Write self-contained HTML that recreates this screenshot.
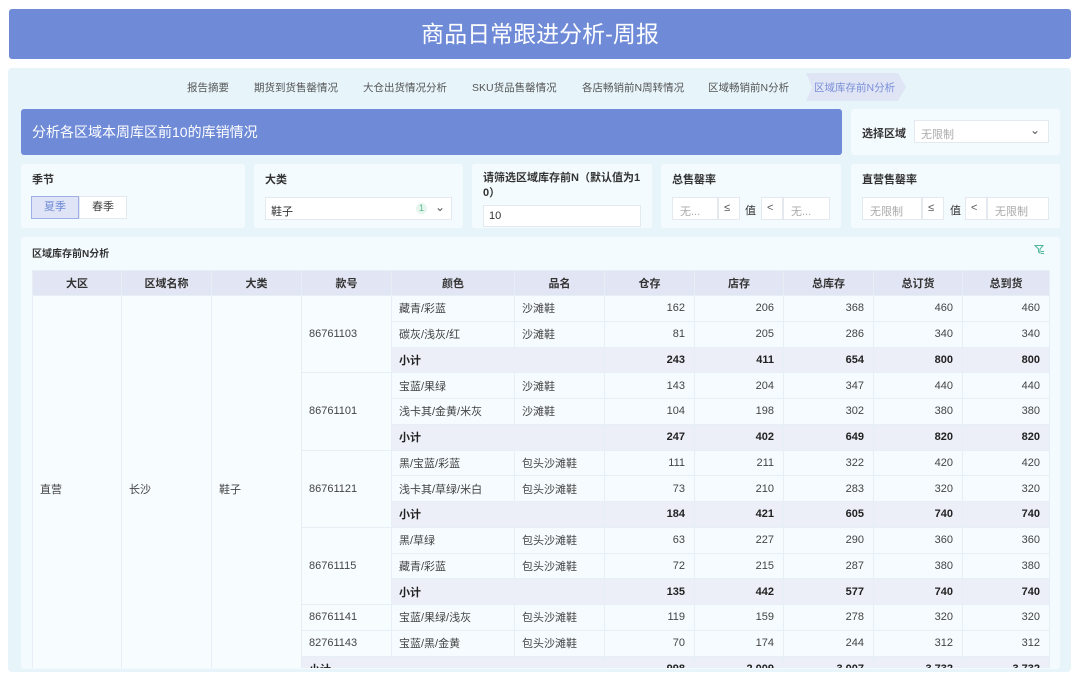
<!DOCTYPE html>
<html><head><meta charset="utf-8"><style>
*{box-sizing:border-box;margin:0;padding:0}
body{width:1080px;height:675px;overflow:hidden;background:#fff;font-family:"Liberation Sans","Noto Sans CJK SC",sans-serif;color:#333;position:relative}
.abs{position:absolute}
.title{left:9px;top:9px;width:1062px;height:50px;background:#6f8bd8;border-radius:3px;color:#fff;font-size:23px;text-align:center;line-height:50px}
.main{left:8px;top:68px;width:1063px;height:604px;background:#e7f5fb;border-radius:4px}
.tab{position:absolute;top:80px;font-size:10.5px;color:#555;white-space:nowrap}
.card{background:#f4fbfe;border-radius:3px}
.lbl{font-size:11px;font-weight:bold;color:#333}
.inp{position:absolute;background:#fff;border:1px solid #e3e9ee;font-size:11px;color:#aaa}
table{border-collapse:collapse;table-layout:fixed;position:absolute;width:1017px;font-size:11px}
td,th{border:1px solid #e6eff5;height:25.75px;padding:0 7px;white-space:nowrap;overflow:hidden}
th{background:#e2e5f3;font-weight:bold;color:#333;text-align:center;height:25px}
td{background:#f5fbfe;color:#444}
td.n{text-align:right;padding-right:9px}
tr.s td{background:#eceff8;font-weight:bold;color:#222}
td.l{background:#f7fcfe}
</style></head><body>
<div class="abs title">商品日常跟进分析-周报</div>
<div class="abs main"></div>
<div class="tab" style="left:187px">报告摘要</div>
<div class="tab" style="left:254px">期货到货售罄情况</div>
<div class="tab" style="left:363px">大仓出货情况分析</div>
<div class="tab" style="left:472px">SKU货品售罄情况</div>
<div class="tab" style="left:582px">各店畅销前N周转情况</div>
<div class="tab" style="left:708px">区域畅销前N分析</div>
<div class="abs" style="left:806px;top:73px;width:100px;height:28px;background:#dfe5f5;clip-path:polygon(0 0,92% 0,100% 50%,92% 100%,0 100%,6% 50%)"></div>
<div class="tab" style="left:814px;color:#7b8fd8">区域库存前N分析</div>

<div class="abs" style="left:21px;top:109px;width:821px;height:46px;background:#6f8bd8;border-radius:3px;color:#fff;font-size:14px;line-height:46px;padding-left:11px">分析各区域本周库区前10的库销情况</div>
<div class="abs card" style="left:851px;top:109px;width:209px;height:46px"></div>
<div class="abs lbl" style="left:862px;top:125px">选择区域</div>
<div class="inp" style="left:914px;top:120px;width:135px;height:23px;padding:5px 6px">无限制<span style="position:absolute;right:8px;top:2px;color:#555;font-size:12px">⌄</span></div>

<div class="abs card" style="left:21px;top:164px;width:224px;height:64px"></div>
<div class="abs lbl" style="left:32px;top:171px">季节</div>
<div class="inp" style="left:31px;top:196px;width:48px;height:23px;background:#dfe4f6;border-color:#9fb0e6;color:#6f8bd8;text-align:center;line-height:21px">夏季</div>
<div class="inp" style="left:79px;top:196px;width:48px;height:23px;color:#444;text-align:center;line-height:21px">春季</div>

<div class="abs card" style="left:254px;top:164px;width:209px;height:64px"></div>
<div class="abs lbl" style="left:265px;top:171px">大类</div>
<div class="inp" style="left:265px;top:197px;width:187px;height:23px;color:#333;padding:5px 5px">鞋子<span style="position:absolute;right:24px;top:5px;width:11px;height:11px;border-radius:50%;background:#e6f6ee;color:#5bb88b;font-size:9px;text-align:center;line-height:11px">1</span><span style="position:absolute;right:6px;top:2px;font-size:12px;color:#555">⌄</span></div>

<div class="abs card" style="left:472px;top:164px;width:180px;height:64px"></div>
<div class="abs lbl" style="left:483px;top:171px;width:160px;line-height:15px">请筛选区域库存前N（默认值为1<br>0）</div>
<div class="inp" style="left:483px;top:205px;width:158px;height:22px;color:#333;padding:4px 5px">10</div>

<div class="abs card" style="left:661px;top:164px;width:180px;height:64px"></div>
<div class="abs lbl" style="left:672px;top:171px">总售罄率</div>
<div class="inp" style="left:672px;top:197px;width:46px;height:23px;padding:5px 7px">无...</div>
<div class="inp" style="left:718px;top:197px;width:22px;height:23px;color:#555;padding:4px 5px">≤</div>
<div class="abs" style="left:745px;top:202px;font-size:11px">值</div>
<div class="inp" style="left:761px;top:197px;width:22px;height:23px;color:#555;padding:4px 5px">&lt;</div>
<div class="inp" style="left:783px;top:197px;width:47px;height:23px;padding:5px 7px">无...</div>

<div class="abs card" style="left:851px;top:164px;width:209px;height:64px"></div>
<div class="abs lbl" style="left:862px;top:171px">直营售罄率</div>
<div class="inp" style="left:862px;top:197px;width:60px;height:23px;padding:5px 7px">无限制</div>
<div class="inp" style="left:922px;top:197px;width:22px;height:23px;color:#555;padding:4px 5px">≤</div>
<div class="abs" style="left:950px;top:202px;font-size:11px">值</div>
<div class="inp" style="left:965px;top:197px;width:22px;height:23px;color:#555;padding:4px 5px">&lt;</div>
<div class="inp" style="left:987px;top:197px;width:62px;height:23px;padding:5px 7px">无限制</div>

<div class="abs card" style="left:21px;top:237px;width:1039px;height:432px;overflow:hidden"></div>
<div class="abs lbl" style="left:32px;top:245px;font-size:10px">区域库存前N分析</div>
<svg class="abs" style="left:1034px;top:244px" width="11" height="11" viewBox="0 0 11 11"><path d="M1 1.5h8L6 5v4L4.5 8V5z" fill="none" stroke="#4cb89a" stroke-width="1"/><path d="M7 7.5h3M7 9.5h3" stroke="#4cb89a"/></svg>
<div class="abs" style="left:21px;top:237px;width:1039px;height:431px;overflow:hidden">
<table style="left:11px;top:33px">
<colgroup><col style="width:89px"><col style="width:90px"><col style="width:90px"><col style="width:90px"><col style="width:123px"><col style="width:90px"><col style="width:90px"><col style="width:89px"><col style="width:90px"><col style="width:89px"><col style="width:87px"></colgroup>
<tr><th>大区</th><th>区域名称</th><th>大类</th><th>款号</th><th>颜色</th><th>品名</th><th>仓存</th><th>店存</th><th>总库存</th><th>总订货</th><th>总到货</th></tr>
<tr><td class="l" rowspan="16">直营</td><td class="l" rowspan="16">长沙</td><td class="l" rowspan="16">鞋子</td><td class="l" rowspan="3">86761103</td><td>藏青/彩蓝</td><td>沙滩鞋</td><td class="n">162</td><td class="n">206</td><td class="n">368</td><td class="n">460</td><td class="n">460</td></tr>
<tr><td>碳灰/浅灰/红</td><td>沙滩鞋</td><td class="n">81</td><td class="n">205</td><td class="n">286</td><td class="n">340</td><td class="n">340</td></tr>
<tr class="s"><td colspan="2">小计</td><td class="n">243</td><td class="n">411</td><td class="n">654</td><td class="n">800</td><td class="n">800</td></tr>
<tr><td class="l" rowspan="3">86761101</td><td>宝蓝/果绿</td><td>沙滩鞋</td><td class="n">143</td><td class="n">204</td><td class="n">347</td><td class="n">440</td><td class="n">440</td></tr>
<tr><td>浅卡其/金黄/米灰</td><td>沙滩鞋</td><td class="n">104</td><td class="n">198</td><td class="n">302</td><td class="n">380</td><td class="n">380</td></tr>
<tr class="s"><td colspan="2">小计</td><td class="n">247</td><td class="n">402</td><td class="n">649</td><td class="n">820</td><td class="n">820</td></tr>
<tr><td class="l" rowspan="3">86761121</td><td>黑/宝蓝/彩蓝</td><td>包头沙滩鞋</td><td class="n">111</td><td class="n">211</td><td class="n">322</td><td class="n">420</td><td class="n">420</td></tr>
<tr><td>浅卡其/草绿/米白</td><td>包头沙滩鞋</td><td class="n">73</td><td class="n">210</td><td class="n">283</td><td class="n">320</td><td class="n">320</td></tr>
<tr class="s"><td colspan="2">小计</td><td class="n">184</td><td class="n">421</td><td class="n">605</td><td class="n">740</td><td class="n">740</td></tr>
<tr><td class="l" rowspan="3">86761115</td><td>黑/草绿</td><td>包头沙滩鞋</td><td class="n">63</td><td class="n">227</td><td class="n">290</td><td class="n">360</td><td class="n">360</td></tr>
<tr><td>藏青/彩蓝</td><td>包头沙滩鞋</td><td class="n">72</td><td class="n">215</td><td class="n">287</td><td class="n">380</td><td class="n">380</td></tr>
<tr class="s"><td colspan="2">小计</td><td class="n">135</td><td class="n">442</td><td class="n">577</td><td class="n">740</td><td class="n">740</td></tr>
<tr><td class="l">86761141</td><td>宝蓝/果绿/浅灰</td><td>包头沙滩鞋</td><td class="n">119</td><td class="n">159</td><td class="n">278</td><td class="n">320</td><td class="n">320</td></tr>
<tr><td class="l">82761143</td><td>宝蓝/黑/金黄</td><td>包头沙滩鞋</td><td class="n">70</td><td class="n">174</td><td class="n">244</td><td class="n">312</td><td class="n">312</td></tr>
<tr class="s"><td colspan="3">小计</td><td class="n">998</td><td class="n">2,009</td><td class="n">3,007</td><td class="n">3,732</td><td class="n">3,732</td></tr>
</table>
</div>
</body></html>
